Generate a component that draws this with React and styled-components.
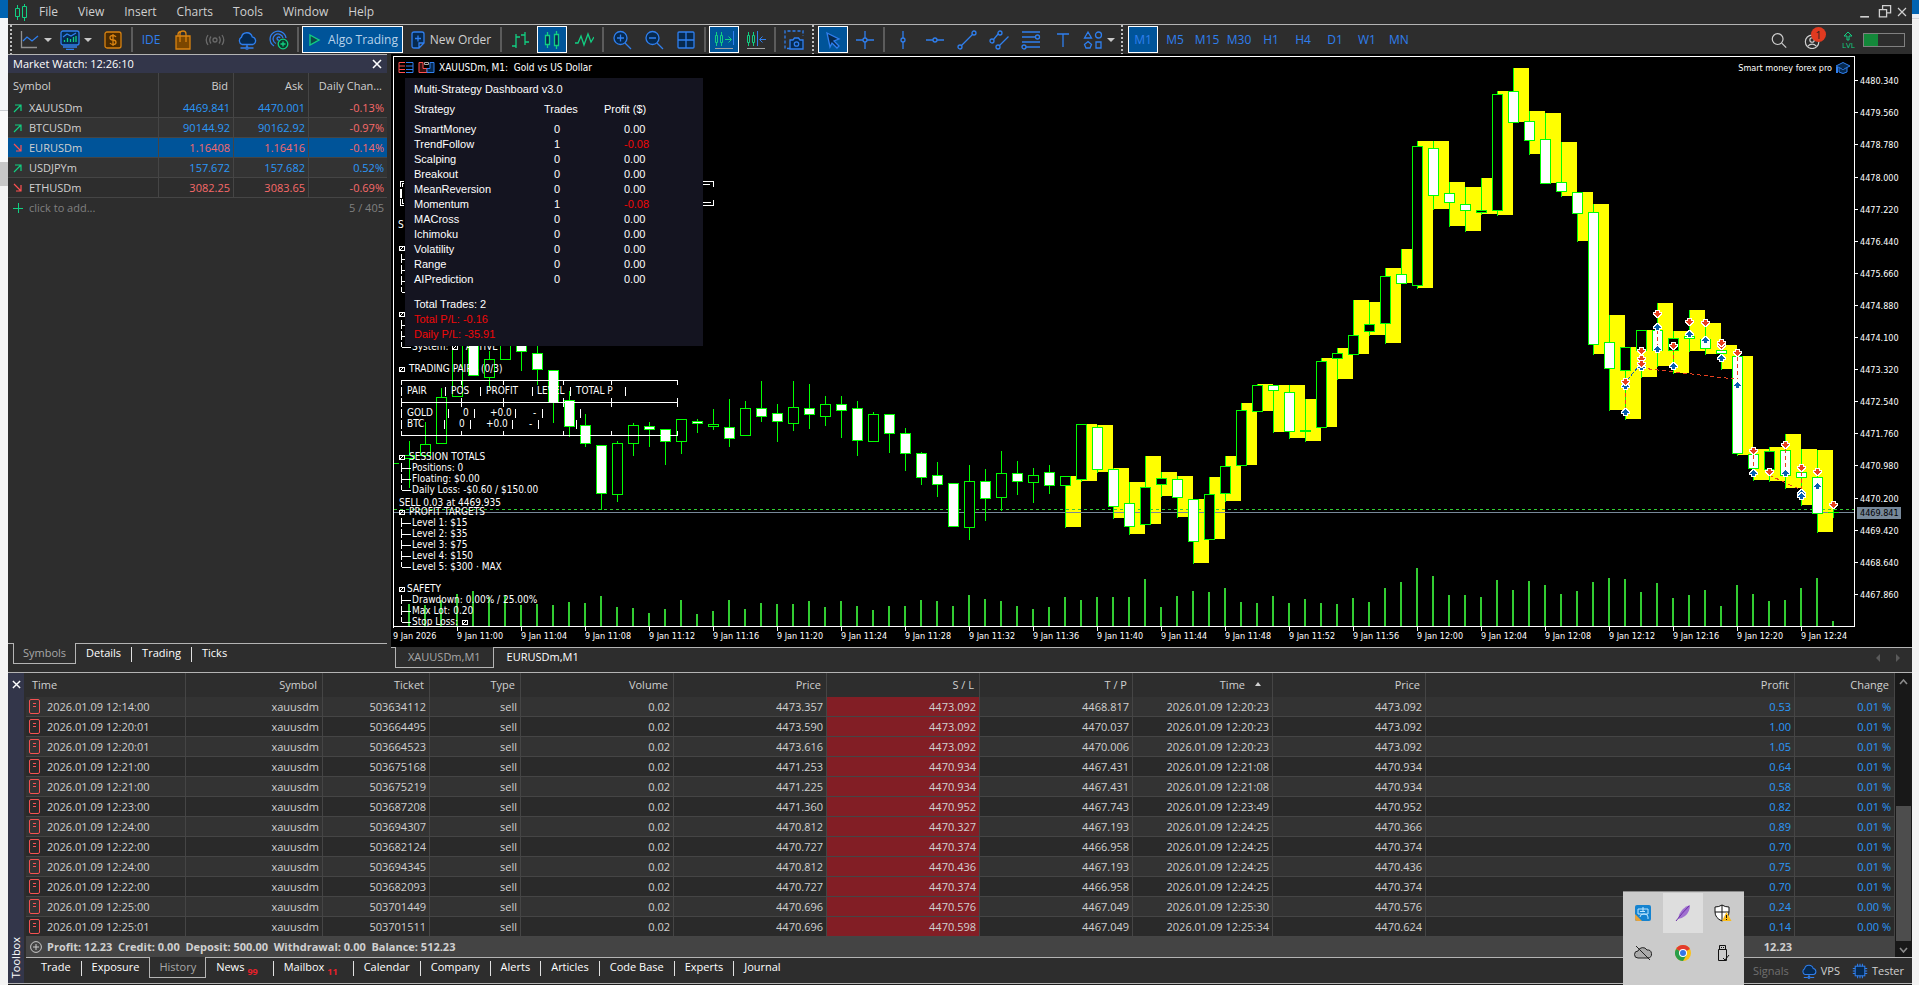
import React from "react"

import styled, { createGlobalStyle } from "styled-components"

const bg = "#2d2d2d"
const text = "#d0d0d0"
const line = "#b4b4b4"
const grid = "#454545"
const blue = "#2f7fee"
const navy = "#06294f"
const selected = "#005499"
const green = "#12cf82"
const up = "#2b98f8"
const down = "#f86a6a"
const slate = "#33364a"
const lime = "#00ff00"

const GlobalStyle = createGlobalStyle`
    * {
        box-sizing: border-box;
    }
    body {
        margin: 0;
        background: #f4f4f4;
        font-family: "Open Sans", "Noto Sans", sans-serif;
        font-size: 11px;
        line-height: 16px;
        color: ${text};
    }
    button {
        background: transparent;
        border: none;
        padding: 0;
        margin: 0;
        font: inherit;
        color: inherit;
        cursor: pointer;
    }
    svg {
        display: block;
        flex: none;
    }
`;

const Desktop = styled.div`
    display: grid;
    grid-template-columns: 8px minmax(0, 1fr) 7px;
    height: 100vh;
    overflow: hidden;
`;

const LeftEdge = styled.div`
    background: linear-gradient(#0063b1 0 18px, #f4f6f8 18px 110px, #c9ccd0 110px 111px, #fafafa 111px 162px, #c8c8c8 162px 186px, #f4f4f4 186px);
`;

const RightEdge = styled.div`
    background: linear-gradient(#0063b1 0 14px, #e9eef4 14px 18px, #cfd3d8 18px 19px, #f2f2f2 19px);
`;

const Window = styled.main`
    display: grid;
    grid-template-rows: auto auto minmax(0, 1fr) auto;
    background: ${bg};
    border-bottom: 1px solid #1c1c1c;
    min-width: 0;
`;

const MenuBar = styled.header`
    display: flex;
    align-items: center;
    height: 25px;
    padding: 0 5px 0 6px;
    border-bottom: 1px solid ${line};
    font-size: 12px;
`;

const Menu = styled.nav`
    display: flex;
    flex: 1;
    gap: 20px;
    margin-left: 10px;
`;

const WindowButtons = styled.div`
    display: flex;
    gap: 4px;
    align-items: center;
`;

const Toolbar = styled.div`
    display: flex;
    align-items: center;
    height: 29px;
    font-size: 12px;
    padding-right: 7px;
`;

const Tool = styled.button`
    display: flex;
    align-items: center;
    justify-content: center;
    gap: ${p => p.$gap || 0}px;
    width: ${p => p.$width || 30}px;
    height: 27px;
    margin: 0 1px;
    color: ${p => p.$color || blue};
    background: ${p => p.$active ? selected : "transparent"};
    border: 1px solid ${p => p.$active ? "#fff" : "transparent"};
    white-space: nowrap;
`;

const Separator = styled.span`
    width: 2px;
    height: 25px;
    margin: 0 2px;
    background: #5c5c5c;
`;

const Grip = styled.span`
    width: 2px;
    height: 29px;
    margin: 0 ${p => p.$after || 4}px 0 2px;
    background: repeating-linear-gradient(#bdbdbd 0 2px, transparent 2px 4px);
`;

const Caret = styled.span`
    border: 4px solid transparent;
    border-top: 4px solid #c8c8c8;
    border-bottom: none;
`;

const ToolbarRight = styled.div`
    display: flex;
    align-items: center;
    gap: 16px;
    margin-left: auto;
`;

const Account = styled.button`
    position: relative;
    width: 22px;
    height: 22px;
`;

const Badge = styled.span`
    position: absolute;
    top: -2px;
    right: 0;
    width: 15px;
    height: 15px;
    border-radius: 50%;
    background: #e03a20;
    color: #222;
    font-size: 11px;
    line-height: 15px;
    text-align: center;
`;

const Level = styled.div`
    display: flex;
    flex-direction: column;
    align-items: center;
    color: ${green};
    font-size: 8px;
    line-height: 8px;
`;

const Connection = styled.div`
    width: 42px;
    height: 14px;
    margin-left: -8px;
    border: 1px solid #808080;
    background: linear-gradient(90deg, #14883a 0 14px, transparent 14px);
`;

const Workspace = styled.section`
    display: grid;
    grid-template-columns: 379px minmax(0, 1fr);
    column-gap: 4px;
    min-height: 0;
`;

const Panel = styled.aside`
    display: flex;
    flex-direction: column;
    border-top: 1px solid ${line};
    min-height: 0;
`;

const PanelTitle = styled.div`
    display: flex;
    align-items: center;
    justify-content: space-between;
    height: 18px;
    padding: 0 5px;
    background: ${slate};
    color: #fff;
`;

const WatchTable = styled.table`
    width: 100%;
    table-layout: fixed;
    border-collapse: separate;
    border-spacing: 0;
    th, td {
        padding: 0 3px;
        font-weight: 400;
        text-align: right;
        white-space: nowrap;
        border-right: 1px solid ${grid};
    }
    th {
        height: 25px;
        padding: 0 5px;
    }
    td {
        height: 20px;
        border-bottom: 1px solid ${grid};
    }
    th:first-child, td:first-child {
        text-align: left;
        padding-left: 5px;
    }
    th:last-child, td:last-child {
        border-right: none;
    }
    tfoot td {
        border: none;
        color: #808080;
    }
`;

const WatchRow = styled.tr`
    background: ${p => p.$selected ? selected : "transparent"};
    &:nth-child(even) {
        background: #333;
    }
`;

const SymbolName = styled.span`
    display: flex;
    align-items: center;
    gap: 6px;
`;

const Quote = styled.td`
    color: ${p => p.$down ? down : up};
`;

const Tabs = styled.div`
    display: flex;
    align-items: flex-start;
    flex: none;
    height: ${p => p.$height}px;
    padding-left: ${p => p.$indent || 0}px;
    margin-top: ${p => p.$push ? "auto" : 0};
    border-top: 1px solid ${line};
`;

const Tab = styled.button`
    display: flex;
    align-items: center;
    height: 21px;
    padding: 0 ${p => p.$pad || 9}px;
    color: ${p => p.$active ? "#a8a8a8" : "#fff"};
    background: ${p => p.$active ? bg : "transparent"};
    border: 1px solid ${p => p.$active ? line : "transparent"};
    border-top: none;
    margin-top: -1px;
    white-space: nowrap;
`;

const TabLine = styled.span`
    width: 1px;
    height: 15px;
    margin-top: 3px;
    background: #e0e0e0;
`;

const Count = styled.sub`
    color: #e8202a;
    font-size: 9px;
    line-height: 9px;
    font-weight: 700;
    margin: 8px 5px 0 3px;
    vertical-align: baseline;
`;

const ChartColumn = styled.div`
    display: flex;
    flex-direction: column;
    min-width: 0;
    min-height: 0;
`;

const ChartArea = styled.div`
    position: relative;
    flex: 1;
    min-height: 0;
    background: #000;
    overflow: hidden;
    svg.plot {
        width: 100%;
        height: 100%;
        shape-rendering: crispEdges;
    }
    svg.plot text {
        font-family: "DejaVu Sans Condensed", "DejaVu Sans", sans-serif;
        font-size: 10px;
        fill: #fff;
    }
    svg.plot .axis text, svg.plot .expert {
        font-size: 9px;
    }
`;

const Dashboard = styled.div`
    position: absolute;
    left: 14px;
    top: 24px;
    width: 298px;
    padding: 4px 9px;
    background: #141420;
    color: #fff;
    font-family: "Liberation Sans", Arial, sans-serif;
    font-size: 11px;
    line-height: 15px;
`;

const Strategies = styled.table`
    border-collapse: collapse;
    margin-bottom: 10px;
    th, td {
        font-weight: 400;
        text-align: left;
        padding: 0;
        width: 60px;
    }
    th {
        padding: 5px 0;
    }
    th:first-child, td:first-child {
        width: 130px;
    }
    td:nth-child(2) {
        padding-left: 10px;
    }
    td:nth-child(3) {
        padding-left: 20px;
    }
`;

const Result = styled.td`
    color: ${p => p.$loss ? "#f00808" : "#fff"};
`;

const Loss = styled.div`
    color: #f00808;
`;

const ChartTabs = styled(Tabs)`
    justify-content: space-between;
`;

const TabGroup = styled.div`
    display: flex;
`;

const Pager = styled.div`
    display: flex;
    gap: 12px;
    padding: 5px 10px 0 0;
    color: #5a5a5a;
`;

const Toolbox = styled.section`
    display: grid;
    grid-template-columns: 16px minmax(0, 1fr);
    column-gap: 2px;
    border-top: 1px solid ${line};
    border-bottom: 1px solid ${line};
`;

const Strip = styled.div`
    display: flex;
    flex-direction: column;
    justify-content: space-between;
    align-items: center;
    padding: 7px 0 5px;
    background: ${slate};
    color: #fff;
    span {
        writing-mode: vertical-rl;
        transform: rotate(180deg);
    }
`;

const History = styled.div`
    display: grid;
    grid-template-columns: minmax(0, 1fr) 17px;
`;

const HistoryTable = styled.table`
    width: 100%;
    table-layout: fixed;
    border-collapse: separate;
    border-spacing: 0;
    th, td {
        font-weight: 400;
        text-align: right;
        white-space: nowrap;
        padding: 0 3px;
        border-right: 1px solid ${grid};
    }
    th {
        height: 24px;
        padding: 0 5px;
    }
    td {
        height: 20px;
        border-bottom: 1px solid ${grid};
    }
    tbody tr:nth-child(odd) {
        background: #333;
    }
    tbody tr:nth-child(even) {
        background: #2a2a2a;
    }
    th:first-child {
        text-align: left;
        padding-left: 6px;
    }
`;

const TimeCell = styled.span`
    display: flex;
    align-items: center;
    gap: 7px;
`;

const StopLoss = styled.td`
    background: #821e25;
`;

const Profit = styled.td`
    color: ${up};
`;

const SortMark = styled.span`
    display: inline-block;
    margin: 0 6px 3px 10px;
    border: 3px solid transparent;
    border-bottom: 4px solid ${text};
    border-top: none;
`;

const Scroll = styled.div`
    grid-row: span 2;
    display: flex;
    flex-direction: column;
    align-items: center;
    background: #181818;
    color: #8a8a8a;
    padding: 6px 0 4px;
`;

const Thumb = styled.div`
    width: 15px;
    height: 135px;
    margin: auto 0 6px;
    background: #4d4d4d;
`;

const Summary = styled.div`
    display: flex;
    align-items: center;
    gap: 5px;
    height: 20px;
    padding: 0 103px 0 4px;
    background: #444;
    font-weight: 700;
    white-space: pre;
    span:last-child {
        margin-left: auto;
    }
`;

const Services = styled.div`
    display: flex;
    align-items: center;
    align-self: stretch;
    gap: 12px;
    margin-left: auto;
    padding-right: 8px;
`;

const Service = styled.button`
    display: flex;
    align-items: center;
    gap: 4px;
    color: ${p => p.$off ? "#707070" : text};
`;

const Tray = styled.div`
    position: fixed;
    right: 175px;
    bottom: 0;
    width: 121px;
    height: 94px;
    padding: 1px 0;
    overflow: hidden;
    display: grid;
    grid-template-columns: repeat(3, 40px);
    grid-auto-rows: 40px;
    background: #cbcbcb;
    border-top: 1px solid #8a8a8a;
`;

const TrayButton = styled.button`
    display: flex;
    align-items: center;
    justify-content: center;
    background: ${p => p.$hover ? "#dedede" : "transparent"};
`;

const Icon = ({ size = 20, color = blue, fill = "none", width = 1.3, children }) => (
    <svg width={size} height={size} viewBox="0 0 20 20" fill={fill} stroke={color} strokeWidth={width}>
        {children}
    </svg>
)

const Cross = ({ size = 10, color = "#fff", width = 1.6 }) => (
    <svg width={size} height={size} viewBox="0 0 10 10" stroke={color} strokeWidth={width}>
        <path d="M1 1L9 9M9 1L1 9" />
    </svg>
)

const Logo = () => (
    <svg width="15" height="17" viewBox="0 0 15 17" fill="none" stroke={green}>
        <path d="M3.500 1v3M3.500 13v3M1.500 4.500h4v8h-4zM10.500 0v2M10.500 14v3M8.500 2.500h4v11h-4z" />
    </svg>
)

const Candles = () => (
    <Icon color={green}>
        <path d="M5.500 2v3M5.500 15v3M14.500 1v3M14.500 16v3" />
        <path d="M3.500 5.500h4v9h-4zM12.500 4.500h4v11h-4z" fill={navy} />
    </Icon>
)

const Cloud = ({ size = 20 }) => (
    <Icon size={size}>
        <path d="M5 14.500a4 4 0 0 1 -.5 -7.300a5.500 5.500 0 0 1 10.700 -.4a4 4 0 0 1 .8 7.700z" fill={navy} />
        <path d="M10 14.500v3.500M3.500 18h5M11.500 18h5" />
        <circle cx="10" cy="18" r="1.2" />
    </Icon>
)

const Trend = ({ falling }) => (
    <svg width="10" height="10" viewBox="0 0 10 10" fill="none" stroke={falling ? "#ff5050" : green} strokeWidth="1.2">
        {falling ? <path d="M1 1L8 8M8 2V8H3" /> : <path d="M1 9L8 2M2 2H8V8" />}
    </svg>
)

const Doc = () => (
    <svg width="11" height="15" viewBox="0 0 11 15" fill="none" stroke="#f45252">
        <rect x="0.5" y="0.5" width="10" height="14" rx="1.5" />
        <path d="M4 4.500h3M4 7.500h3" />
    </svg>
)

const quotes = [
    ["XAUUSDm", "4469.841", "4470.001", "-0.13%", 0],
    ["BTCUSDm", "90144.92", "90162.92", "-0.97%", 0],
    ["EURUSDm", "1.16408", "1.16416", "-0.14%", 1],
    ["USDJPYm", "157.672", "157.682", "0.52%", 0],
    ["ETHUSDm", "3082.25", "3083.65", "-0.69%", 1],
]

const strategies = [
    ["SmartMoney", 0, "0.00"],
    ["TrendFollow", 1, "-0.08"],
    ["Scalping", 0, "0.00"],
    ["Breakout", 0, "0.00"],
    ["MeanReversion", 0, "0.00"],
    ["Momentum", 1, "-0.08"],
    ["MACross", 0, "0.00"],
    ["Ichimoku", 0, "0.00"],
    ["Volatility", 0, "0.00"],
    ["Range", 0, "0.00"],
    ["AIPrediction", 0, "0.00"],
]

const deals = [
    ["12:14:00", "503634112", "4473.357", "4473.092", "4468.817", "12:20:23", "4473.092", "0.53", "0.01 %"],
    ["12:20:01", "503664495", "4473.590", "4473.092", "4470.037", "12:20:23", "4473.092", "1.00", "0.01 %"],
    ["12:20:01", "503664523", "4473.616", "4473.092", "4470.006", "12:20:23", "4473.092", "1.05", "0.01 %"],
    ["12:21:00", "503675168", "4471.253", "4470.934", "4467.431", "12:21:08", "4470.934", "0.64", "0.01 %"],
    ["12:21:00", "503675219", "4471.225", "4470.934", "4467.431", "12:21:08", "4470.934", "0.58", "0.01 %"],
    ["12:23:00", "503687208", "4471.360", "4470.952", "4467.743", "12:23:49", "4470.952", "0.82", "0.01 %"],
    ["12:24:00", "503694307", "4470.812", "4470.327", "4467.193", "12:24:25", "4470.366", "0.89", "0.01 %"],
    ["12:22:00", "503682124", "4470.727", "4470.374", "4466.958", "12:24:25", "4470.374", "0.70", "0.01 %"],
    ["12:24:00", "503694345", "4470.812", "4470.436", "4467.193", "12:24:25", "4470.436", "0.75", "0.01 %"],
    ["12:22:00", "503682093", "4470.727", "4470.374", "4466.958", "12:24:25", "4470.374", "0.70", "0.01 %"],
    ["12:25:00", "503701449", "4470.696", "4470.576", "4467.049", "12:25:30", "4470.576", "0.24", "0.00 %"],
    ["12:25:01", "503701511", "4470.696", "4470.598", "4467.049", "12:25:34", "4470.624", "0.14", "0.00 %"],
]

// high, body top, body bottom, low, bearish
const candles = [
    [441, 455, 458, 487, 0], [422, 444, 455, 456, 0], [388, 397, 443, 443, 0], [330, 336, 396, 396, 0],
    [330, 336, 375, 375, 1], [351, 359, 377, 387, 0], [330, 336, 359, 359, 0], [330, 340, 351, 370, 1],
    [346, 353, 369, 384, 1], [370, 370, 402, 422, 1], [391, 400, 426, 436, 1], [414, 425, 443, 446, 1],
    [445, 445, 493, 509, 1], [441, 443, 494, 501, 0], [423, 425, 443, 455, 0], [422, 426, 429, 446, 1],
    [429, 429, 441, 464, 1], [419, 419, 441, 453, 0], [419, 421, 423, 432, 1], [409, 424, 426, 429, 0],
    [399, 427, 438, 446, 1], [401, 408, 435, 435, 0], [381, 408, 416, 421, 1], [404, 413, 421, 441, 1],
    [381, 407, 423, 430, 0], [384, 408, 414, 428, 1], [396, 404, 416, 425, 0], [396, 404, 410, 437, 1],
    [401, 408, 440, 455, 1], [412, 414, 441, 441, 0], [414, 414, 433, 452, 1], [428, 433, 453, 470, 1],
    [452, 453, 477, 484, 1], [462, 475, 484, 496, 1], [483, 483, 526, 526, 1], [465, 481, 527, 539, 0],
    [469, 481, 498, 520, 1], [451, 473, 497, 510, 0], [461, 473, 481, 494, 1], [468, 475, 482, 502, 0],
    [465, 472, 485, 493, 1], [476, 476, 485, 527, 0], [424, 424, 479, 481, 0], [425, 427, 469, 472, 1],
    [468, 469, 506, 518, 1], [482, 503, 526, 534, 1], [456, 487, 524, 524, 0], [472, 478, 484, 496, 0],
    [476, 479, 497, 517, 1], [499, 499, 541, 563, 1], [477, 494, 539, 539, 0], [456, 466, 493, 501, 0],
    [403, 410, 465, 465, 0], [384, 385, 411, 411, 0], [385, 385, 390, 432, 1], [385, 392, 431, 438, 1],
    [399, 430, 431, 441, 0], [358, 361, 427, 427, 0], [348, 353, 358, 379, 0], [300, 335, 354, 354, 0],
    [302, 324, 331, 335, 0], [268, 276, 323, 343, 0], [249, 274, 283, 283, 1], [141, 146, 285, 288, 0],
    [141, 148, 195, 209, 1], [182, 193, 202, 226, 1], [187, 204, 210, 231, 1], [178, 210, 212, 214, 0],
    [91, 94, 210, 215, 0], [68, 91, 122, 122, 1], [111, 121, 140, 154, 1], [113, 139, 183, 183, 1],
    [142, 182, 191, 196, 1], [192, 192, 213, 241, 1], [204, 212, 344, 354, 1], [315, 342, 368, 410, 1],
    [347, 347, 370, 419, 0], [330, 330, 350, 377, 0], [303, 330, 350, 366, 1], [331, 338, 350, 373, 0],
    [310, 336, 338, 351, 1], [323, 339, 348, 354, 1], [345, 350, 353, 369, 1], [356, 356, 453, 455, 1],
    [449, 454, 468, 480, 1], [447, 451, 469, 481, 0], [434, 450, 475, 488, 1], [449, 472, 477, 505, 1],
    [450, 477, 513, 532, 1], [505, 512, 512, 517, 0],
]

const volumes = [
    22, 21, 26, 32, 35, 29, 30, 21, 22, 21, 24, 23, 30, 19, 18, 13, 17, 26, 12, 15, 26, 17, 23,
    22, 22, 25, 19, 25, 20, 16, 20, 20, 26, 25, 20, 31, 27, 25, 20, 17, 19, 29, 26, 29, 29, 29,
    47, 19, 30, 35, 34, 38, 24, 23, 30, 23, 27, 23, 22, 28, 24, 38, 44, 58, 50, 31, 31, 29, 46,
    36, 45, 41, 32, 35, 44, 48, 47, 34, 43, 28, 31, 36, 20, 41, 32, 25, 26, 38, 48, 5,
]

const sells = [
    [78, 314], [77, 351], [77, 359], [77, 364], [76, 382], [79, 346], [80, 322], [81, 323], [82, 346],
    [82, 343], [83, 353], [84, 451], [85, 472], [86, 445], [87, 468], [88, 472], [89, 505],
]
const buys = [
    [78, 326], [78, 348], [76, 385], [76, 411], [77, 366], [79, 365], [80, 333], [81, 339], [82, 357],
    [83, 384], [84, 472], [86, 472], [87, 492], [87, 495], [88, 485],
]

const prices = [
    ["4480.340", 80], ["4479.560", 112], ["4478.780", 144], ["4478.000", 177], ["4477.220", 209],
    ["4476.440", 241], ["4475.660", 273], ["4474.880", 305], ["4474.100", 337], ["4473.320", 369],
    ["4472.540", 401], ["4471.760", 433], ["4470.980", 465], ["4470.200", 498], ["4469.420", 530],
    ["4468.640", 562], ["4467.860", 594],
]

const notes = [
    [398, 225, "S"],
    [412, 347, "System:      ACTIVE"],
    [409, 369, "TRADING PAIRS (0/3)"],
    [407, 391, "PAIR"], [451, 391, "POS"], [486, 391, "PROFIT"], [537, 391, "LEVEL"], [576, 391, "TOTAL P"],
    [407, 413, "GOLD"], [463, 413, "0"], [490, 413, "+0.0"], [533, 413, "-"],
    [407, 424, "BTC"], [459, 424, "0"], [486, 424, "+0.0"], [529, 424, "-"],
    [409, 457, "SESSION TOTALS"],
    [412, 468, "Positions: 0"],
    [412, 479, "Floating: $0.00"],
    [412, 490, "Daily Loss: -$0.60 / $150.00"],
    [399, 503, "SELL 0.03 at 4469.935"],
    [409, 512, "PROFIT TARGETS"],
    [412, 523, "Level 1: $15"],
    [412, 534, "Level 2: $35"],
    [412, 545, "Level 3: $75"],
    [412, 556, "Level 4: $150"],
    [412, 567, "Level 5: $300 · MAX"],
    [407, 589, "SAFETY"],
    [412, 600, "Drawdown: 0.00% / 25.00%"],
    [412, 611, "Max Lot: 0.20"],
    [412, 622, "Stop Loss:"],
]

// vertical bars between the cells of the pairs table
const bars = {
    391: [401, 445, 480, 532, 570, 625],
    413: [401, 448, 474, 515, 542, 580],
    424: [401, 444, 470, 512, 538, 576],
}

// first row, number of rows
const trees = [[259, 4], [325, 3], [468, 3], [523, 5], [600, 3]]
const boxes = [[399, 248], [399, 314], [399, 369], [399, 457], [399, 512], [399, 589], [462, 622], [452, 347]]

const cx = i => 409 + i * 16
const bottom = 626

const Arrow = ({ at, y, sell }) => (
    <path
        transform={`translate(${cx(at)} ${y})`}
        d={sell ? "M-1 -3H2V-1H4V0H3V1H2V2H1V3H0V2H-1V1H-2V0H-3V-1H-1Z" : "M-1 4H2V2H4V1H3V0H2V-1H1V-2H0V-1H-1V0H-2V1H-3V2H-1Z"}
        fill={sell ? "#e84020" : "#0860b0"}
        stroke="#fff"
        strokeWidth="2"
        paintOrder="stroke"
    />
)

const Plot = () => (
    <svg className="plot" viewBox="391 54 1521 593" preserveAspectRatio="xMinYMin meet">
        <g fill="#ffff00">
            {candles.map(([high, , , low], i) => i > 40 && i < 89 && (
                <rect key={i} x={cx(i) + 1} y={high} width="15" height={low - high} />
            ))}
        </g>
        <g fill="#32cd32">
            {volumes.map((v, i) => <rect key={i} x={cx(i) - 1} y={bottom - v} width="2" height={v} />)}
        </g>
        <path d="M394 509.500H1854" stroke="#32cd32" strokeDasharray="3 3" />
        <path d="M394 512.500H1854" stroke="#778899" />
        <path d="M394 463.500h5" stroke={lime} />
        {candles.map(([high, top, low, tail, bear], i) => (
            <g key={i}>
                <rect x={cx(i)} y={high} width="1" height={tail - high + 1} fill={lime} />
                <rect x={cx(i) - 5} y={top} width="11" height={low - top + 1} fill={lime} />
                {low - top > 1 && (
                    <rect x={cx(i) - 4} y={top + 1} width="9" height={low - top - 1} fill={bear ? "#fff" : "#000"} />
                )}
            </g>
        ))}
        <g stroke="#e84020" strokeDasharray="4 3">
            <path d="M1641 368L1734 379M1769 475L1801 490M1625.500 386V408M1657.500 330V345M1673.500 348V362M1737.500 357V379M1753.500 455V468M1785.500 449V470M1801.500 472V490M1721.500 347V357" />
        </g>
        <path d="M1627 380L1641 364" stroke="#0860b0" strokeDasharray="4 2" />
        {buys.map(([i, y], k) => <Arrow key={k} at={i} y={y} />)}
        {sells.map(([i, y], k) => <Arrow key={k} at={i} y={y} sell />)}

        <path d="M393.500 628V56.500H1854.500V626.500H393.500" fill="none" stroke="#fff" />
        <g className="axis">
            {prices.map(([label, y]) => (
                <React.Fragment key={label}>
                    <rect x="1855" y={y} width="3" height="1" fill="#fff" />
                    <text x="1860" y={y + 4}>{label}</text>
                </React.Fragment>
            ))}
            <rect x="1857" y="507" width="44" height="12" fill="#778899" />
            <text x="1860" y="516" style={{ fill: "#000" }}>4469.841</text>
            <text x="393" y="639">9 Jan 2026</text>
            {Array.from({ length: 22 }, (_, k) => {
                const minutes = k * 4
                const label = `9 Jan ${11 + Math.floor(minutes / 60)}:${String(minutes % 60).padStart(2, "0")}`
                return (
                    <React.Fragment key={k}>
                        <rect x={457 + k * 64} y={bottom} width="1" height="5" fill="#fff" />
                        <text x={457 + k * 64} y="639">{label}</text>
                    </React.Fragment>
                )
            })}
        </g>

        <g fill="none" stroke="#fff">
            <path d="M404 181.500H400.500V187M404 183.500H402.500V187M400.500 189V198M401.500 189V198M404 205.500H400.500V199M404 203.500H402.500V199" />
            <path d="M703 181.500H713.500V187M703 184.500H710M703 205.500H713.500V200M703 202.500H711" />
            <path d="M401.500 385V380.500H677.500V385M461.500 381v4M503.500 381v4M563.500 381v4M611.500 381v4" />
            <path d="M401.500 402.500H677.500M401.500 398v9M461.500 398v9M503.500 398v9M563.500 398v9M611.500 398v9M677.500 398v9" />
            <path d="M401.500 431V435.500H677.500V431M461.500 431v4M503.500 431v4M563.500 431v4M611.500 431v4" />
            {Object.entries(bars).map(([y, xs]) => xs.map(x => <path key={x} d={`M${x + 0.5} ${y - 4}v9`} />))}
            {trees.map(([y, n]) => Array.from({ length: n }, (_, k) => (
                <path key={y + k} d={`M401.500 ${y + k * 11 - 5}v${k === n - 1 ? 5 : 9}M401.500 ${y + k * 11 + 0.5}h9`} />
            )))}
            {boxes.map(([x, y]) => <path key={x + y} d={`M${x + 0.5} ${y - 1.5}h5v4h-5zM${x + 1} ${y + 2}l4 -4`} />)}
        </g>
        {notes.map(([x, y, label]) => <text key={y + "-" + x} x={x} y={y + 3} xmlSpace="preserve">{label}</text>)}

        <g fill="none" shapeRendering="auto">
            <path d="M405 62.500h-6v10h6M399 66h6M399 69.500h6" stroke="#ff5050" />
            <path d="M406 62.500h7v10h-7M406 66h7M406 69.500h7" stroke={blue} />
            <path d="M423 62.500h-4v10h8v-4h-4z" stroke="#ff5050" fill="#3a1010" />
            <path d="M430 62.500h4v10h-7v-4h3z" stroke={blue} fill={navy} />
            <path d="M424.500 62.500h4v2h-4z" stroke="#aaa" />
            <path d="M1836 66l7 -3.500l7 3.500l-7 3.500zM1839 68v4q4 3 8 0v-4" stroke={blue} fill={navy} />
            <path d="M1837 67v6" stroke={blue} strokeWidth="2" />
        </g>
        <text x="439" y="71" xmlSpace="preserve">XAUUSDm, M1:  Gold vs US Dollar</text>
        <text className="expert" x="1832" y="71" textAnchor="end">Smart money forex pro</text>
    </svg>
)

const ToolbarRow = () => (
    <Toolbar>
        <Grip />
        <Tool $width={36} $gap={5} aria-label="Chart types">
            <Icon color="#909090"><path d="M2.500 1V17.500H18" /><path d="M4 11l4-4l5 4l6-5" stroke={blue} /></Icon>
            <Caret />
        </Tool>
        <Tool $width={41} $gap={4} aria-label="Indicators">
            <Icon>
                <rect x="1" y="1" width="18" height="14" rx="2" fill={navy} />
                <path d="M3 7l4-3l4 2l5-3M3 17h14M6 19.300h8" />
                <path d="M4.500 12v-2M7.500 12V8M10.500 12V9M13.500 12V7M16 12V6" stroke={green} />
            </Icon>
            <Caret />
        </Tool>
        <Tool aria-label="Deposit">
            <Icon color="#d98310">
                <rect x="2" y="2" width="16" height="16" rx="2" fill="#4a2a00" />
                <path d="M13 7q-1-1.500-3-1.500q-3 0-3 2.200t3 2.300t3 2.300t-3 2.200q-2 0-3-1.500M10 4v12" />
            </Icon>
        </Tool>
        <Separator />
        <Tool>IDE</Tool>
        <Tool aria-label="Market">
            <Icon color="#d98310">
                <path d="M3 6h14v13H3z" fill="#7a4600" />
                <path d="M7 12V4q0-3 3-3t3 3v8M5 6V4.500q0-2.500 2.500-3" />
            </Icon>
        </Tool>
        <Tool aria-label="Signals">
            <Icon color="#6a6a6a">
                <circle cx="10" cy="10" r="2" />
                <path d="M6 6.500q-2.500 3.500 0 7M14 6.500q2.500 3.500 0 7M3 5q-3.500 5 0 10M17 5q3.500 5 0 10" />
            </Icon>
        </Tool>
        <Tool aria-label="VPS"><Cloud /></Tool>
        <Tool aria-label="Community">
            <Icon>
                <path d="M5 16A8 8 0 1 1 17 8M7 13.500A5 5 0 1 1 14 8M10 10a1.500 1.500 0 1 1 1-2" />
                <circle cx="14" cy="14" r="4.800" stroke={green} fill="#0c3a2a" />
                <path d="M14 11.500v5M11.500 14h5" stroke={green} />
            </Icon>
        </Tool>
        <Separator />
        <Tool $width={101} $gap={7} $color="#b8d2ea" $active>
            <svg width="14" height="12" viewBox="0 0 14 12" fill="none" stroke={green} strokeWidth="1.4">
                <path d="M3 1L12 6L3 11Z" fill="#0c4a4a" />
            </svg>
            Algo Trading
        </Tool>
        <Tool $width={92} $gap={5} $color={text}>
            <svg width="14" height="18" viewBox="0 0 14 18" fill="none" stroke={blue} strokeWidth="1.3">
                <path d="M3 1h8q2 0 2 2v9l-5 5H3q-2 0-2-2V3q0-2 2-2zM13 12H8v5" fill={navy} />
                <path d="M7 4.500v6M4 7.500h6" />
            </svg>
            New Order
        </Tool>
        <Separator />
        <Tool aria-label="Bars"><Icon color={green}><path d="M6 4v14M2 16h4M6 7h4M15 2v13M11 5h4M15 12h4" /></Icon></Tool>
        <Tool $active aria-label="Candles"><Candles /></Tool>
        <Tool aria-label="Line"><Icon color={green}><path d="M1 13h3l3-7l3 9l4-11l3 8l3-5" /></Icon></Tool>
        <Separator />
        <Tool aria-label="Zoom in">
            <Icon><circle cx="8.500" cy="8" r="6.500" fill={navy} /><path d="M13 13l6 6M5 8h7M8.500 4.500v7" /></Icon>
        </Tool>
        <Tool aria-label="Zoom out">
            <Icon><circle cx="8.500" cy="8" r="6.500" fill={navy} /><path d="M13 13l6 6M5 8h7" /></Icon>
        </Tool>
        <Tool aria-label="Tile windows">
            <Icon><rect x="2" y="2" width="16" height="16" rx="1" fill={navy} /><path d="M10 2v16M2 10h16" /></Icon>
        </Tool>
        <Separator />
        <Tool $active aria-label="Auto scroll">
            <Icon color={green} width={1}>
                <path d="M1.500 5.500h2v7h-2zM6.500 5.500h2v7h-2zM2.500 2v3M2.500 13v3M7.500 2v3M7.500 13v3M11 9.500h6M14.500 6.500l3 3l-3 3" />
                <path d="M19.500 1v14" stroke={blue} /><path d="M1 18.500h18" stroke="#a0a0a0" />
            </Icon>
        </Tool>
        <Tool aria-label="Chart shift">
            <Icon color={green} width={1}>
                <path d="M1.500 5.500h2v7h-2zM6.500 5.500h2v7h-2zM2.500 2v3M2.500 13v3M7.500 2v3M7.500 13v3" />
                <path d="M11.500 1v15M14 9.500h6M16.500 6.500l-3 3l3 3" stroke={blue} /><path d="M1 18.500h18" stroke="#a0a0a0" />
            </Icon>
        </Tool>
        <Separator />
        <Tool aria-label="Screenshot">
            <Icon>
                <path d="M6 18.500H1V1h18v5" strokeDasharray="3 2" />
                <path d="M6 10h3l1.500-2h4L16 10h3v9H6z" fill={navy} /><circle cx="12.500" cy="14" r="2.200" />
            </Icon>
        </Tool>
        <Grip $after={3} />
        <Tool $active aria-label="Cursor"><Icon><path d="M4 3l12 6l-5 2l5 5l-2 2l-5-5l-2 4z" fill={navy} /></Icon></Tool>
        <Tool aria-label="Crosshair"><Icon><path d="M10 1v7M10 12v7M1 10h7M12 10h7" /><circle cx="10" cy="10" r="2" /></Icon></Tool>
        <Separator />
        <Tool aria-label="Vertical line"><Icon><path d="M10 1v7M10 12v7" /><circle cx="10" cy="10" r="2" /></Icon></Tool>
        <Tool aria-label="Horizontal line"><Icon><path d="M1 10h7M12 10h7" /><circle cx="10" cy="10" r="2" /></Icon></Tool>
        <Tool aria-label="Trend line"><Icon><path d="M4.500 15.500l11-11" /><circle cx="3" cy="17" r="2" /><circle cx="17" cy="3" r="2" /></Icon></Tool>
        <Tool aria-label="Channel">
            <Icon><path d="M4.500 9.500l5-6M10.500 15.500l9-9" /><circle cx="3" cy="11" r="2" /><circle cx="11" cy="3" r="2" /><circle cx="9" cy="17" r="2" /></Icon>
        </Tool>
        <Tool aria-label="Fibonacci">
            <Icon><path d="M1 2h18M1 7h13M1 12h18M5 17h14" /><circle cx="16.500" cy="7" r="2" /><circle cx="3" cy="17" r="2" /></Icon>
        </Tool>
        <Tool aria-label="Text"><Icon><path d="M4 4h12M10 4v13" /></Icon></Tool>
        <Tool $width={38} $gap={4} aria-label="Shapes">
            <Icon>
                <path d="M5 2l3.500 6h-7zM13 12h5v6h-5zM5 11.500l3.500 3l-1.500 3.500H3l-1.500-3.500z" /><circle cx="15.500" cy="5" r="3" />
            </Icon>
            <Caret />
        </Tool>
        <Grip />
        {["M1", "M5", "M15", "M30", "H1", "H4", "D1", "W1", "MN"].map(t => <Tool key={t} $active={t === "M1"}>{t}</Tool>)}
        <ToolbarRight>
            <button aria-label="Search">
                <Icon size={18} color={text}><circle cx="8.500" cy="9" r="6" /><path d="M13 13.500l5 5" /></Icon>
            </button>
            <Account aria-label="Account">
                <Icon size={18} color={text}><circle cx="9" cy="12" r="7.500" /><circle cx="9" cy="10" r="2.500" /><path d="M4 17q5-5 10 0" /></Icon>
                <Badge>1</Badge>
            </Account>
            <Level>
                <svg width="10" height="10" viewBox="0 0 10 10" fill="none" stroke={green}><path d="M5 1L9 5H6V9H4V5H1Z" /></svg>
                LVL
            </Level>
            <Connection />
        </ToolbarRight>
    </Toolbar>
)

const MarketWatch = () => (
    <Panel>
        <PanelTitle>
            Market Watch: 12:26:10
            <button aria-label="Close Market Watch"><Cross /></button>
        </PanelTitle>
        <WatchTable>
            <colgroup><col /><col width="75" /><col width="75" /><col width="78" /></colgroup>
            <thead>
                <tr><th>Symbol</th><th>Bid</th><th>Ask</th><th>Daily Chan...</th></tr>
            </thead>
            <tbody>
                {quotes.map(([name, bid, ask, change, falling]) => (
                    <WatchRow key={name} $selected={name === "EURUSDm"}>
                        <td><SymbolName><Trend falling={falling} />{name}</SymbolName></td>
                        <Quote $down={falling}>{bid}</Quote>
                        <Quote $down={falling}>{ask}</Quote>
                        <Quote $down={change[0] === "-"}>{change}</Quote>
                    </WatchRow>
                ))}
            </tbody>
            <tfoot>
                <tr>
                    <td>
                        <SymbolName>
                            <svg width="10" height="10" viewBox="0 0 10 10" stroke={green}><path d="M5.500 0V10M0 5.500H10" /></svg>
                            click to add...
                        </SymbolName>
                    </td>
                    <td /><td /><td>5 / 405</td>
                </tr>
            </tfoot>
        </WatchTable>
        <Tabs $height={29} $indent={5} $push>
            <Tab $active>Symbols</Tab>
            <Tab>Details</Tab>
            <TabLine />
            <Tab>Trading</Tab>
            <TabLine />
            <Tab>Ticks</Tab>
        </Tabs>
    </Panel>
)

const StrategyPanel = () => (
    <Dashboard>
        <div>Multi-Strategy Dashboard v3.0</div>
        <Strategies>
            <thead><tr><th>Strategy</th><th>Trades</th><th>Profit ($)</th></tr></thead>
            <tbody>
                {strategies.map(([name, trades, profit]) => (
                    <tr key={name}>
                        <td>{name}</td>
                        <td>{trades}</td>
                        <Result $loss={profit[0] === "-"}>{profit}</Result>
                    </tr>
                ))}
            </tbody>
        </Strategies>
        <div>Total Trades: 2</div>
        <Loss>Total P/L: -0.16</Loss>
        <Loss>Daily P/L: -35.91</Loss>
    </Dashboard>
)

const TradeHistory = () => (
    <HistoryTable>
        <colgroup>
            <col width="160" /><col width="137" /><col width="107" /><col width="91" /><col width="153" />
            <col width="153" /><col width="153" /><col width="153" /><col width="140" /><col width="153" />
            <col /><col width="100" />
        </colgroup>
        <thead>
            <tr>
                <th>Time</th><th>Symbol</th><th>Ticket</th><th>Type</th><th>Volume</th><th>Price</th>
                <th>S / L</th><th>T / P</th><th>Time<SortMark /></th><th>Price</th><th>Profit</th><th>Change</th>
            </tr>
        </thead>
        <tbody>
            {deals.map(([time, ticket, price, sl, tp, closed, closePrice, profit, change]) => (
                <tr key={ticket}>
                    <td><TimeCell><Doc />2026.01.09 {time}</TimeCell></td>
                    <td>xauusdm</td>
                    <td>{ticket}</td>
                    <td>sell</td>
                    <td>0.02</td>
                    <td>{price}</td>
                    <StopLoss>{sl}</StopLoss>
                    <td>{tp}</td>
                    <td>2026.01.09 {closed}</td>
                    <td>{closePrice}</td>
                    <Profit>{profit}</Profit>
                    <Profit>{change}</Profit>
                </tr>
            ))}
        </tbody>
    </HistoryTable>
)

const toolboxTabs = [
    "Trade", "Exposure", "History", "News", "Mailbox", "Calendar", "Company", "Alerts", "Articles",
    "Code Base", "Experts", "Journal",
]
const counts = { News: 99, Mailbox: 11 }

const TrayIcons = () => (
    <Tray>
        <TrayButton aria-label="Graphics">
            <svg width="16" height="16" viewBox="0 0 16 16">
                <rect width="16" height="16" rx="2" fill="#1583d0" /><path d="M0 9v5q0 2 2 2h5z" fill="#e8a33a" />
                <path d="M3 4h10v5H3zM5 12q0-3 4-3t4 3v2M5 6.500h5M8 2v4" stroke="#bfe6ff" fill="none" />
            </svg>
        </TrayButton>
        <TrayButton $hover aria-label="Feather">
            <svg width="16" height="18" viewBox="0 0 16 18">
                <path d="M15 1Q15 8 10 12Q6 15 3 15Q4 9 8 5Q11 2 15 1Z" fill="#a070d0" />
                <path d="M1 17Q7 9 14 2" stroke="#6c2fa8" fill="none" />
            </svg>
        </TrayButton>
        <TrayButton aria-label="Security">
            <svg width="18" height="18" viewBox="0 0 18 18">
                <path d="M8 1Q11 3 15 3V8Q15 14 8 17Q1 14 1 8V3Q5 3 8 1Z" fill="#fff" stroke="#111" />
                <path d="M8 1v16M1 8h14" stroke="#111" />
                <path d="M12.500 8L17.500 17H8Z" fill="#fbbc1a" /><path d="M12.500 11v3M12.500 15v1" stroke="#111" />
            </svg>
        </TrayButton>
        <TrayButton aria-label="Cloud drive">
            <svg width="18" height="16" viewBox="0 0 18 16" fill="none" stroke="#222">
                <path d="M4 13a3.500 3.500 0 0 1 0-7a5 5 0 0 1 9-1a4 4 0 0 1 1 8z" fill="#aaa" /><path d="M2 1L16 15" />
            </svg>
        </TrayButton>
        <TrayButton aria-label="Chrome">
            <svg width="16" height="16" viewBox="0 0 16 16">
                <circle cx="8" cy="8" r="8" fill="#fbc116" />
                <path d="M8 8L1.070 4A8 8 0 0 1 14.930 4Z" fill="#e33b2e" />
                <path d="M8 8L1.070 4A8 8 0 0 0 8 16Z" fill="#2a9e4a" />
                <path d="M8 8H8L8 16L11.500 10Z" fill="#2a9e4a" />
                <circle cx="8" cy="8" r="4" fill="#fff" /><circle cx="8" cy="8" r="3" fill="#3576e8" />
            </svg>
        </TrayButton>
        <TrayButton aria-label="Eject device">
            <svg width="14" height="18" viewBox="0 0 14 18" fill="none" stroke="#111">
                <path d="M3.500 5.500V1.500h6v4M2.500 5.500h8v11h-8zM5 3.500h1M7 3.500h1" /><path d="M7 14l2 2l4-5" />
            </svg>
        </TrayButton>
    </Tray>
)

const App = () => {
    const [tab, setTab] = React.useState("History")

    return (
        <Desktop>
            <GlobalStyle />
            <LeftEdge />
            <Window>
                <MenuBar>
                    <Logo />
                    <Menu>
                        {["File", "View", "Insert", "Charts", "Tools", "Window", "Help"].map(m => <button key={m}>{m}</button>)}
                    </Menu>
                    <WindowButtons>
                        <button aria-label="Minimize"><Icon size={16} color={text} width={2}><path d="M4 16h11" /></Icon></button>
                        <button aria-label="Restore">
                            <Icon size={16} color={text} width={1.6}><path d="M7 7V2h10v9h-5M3 7h9v9H3z" /></Icon>
                        </button>
                        <button aria-label="Close"><Cross color={text} width={1.2} /></button>
                    </WindowButtons>
                </MenuBar>
                <ToolbarRow />
                <Workspace>
                    <MarketWatch />
                    <ChartColumn>
                        <ChartArea>
                            <Plot />
                            <StrategyPanel />
                        </ChartArea>
                        <ChartTabs $height={25} $indent={4}>
                            <TabGroup>
                                <Tab $pad={12} $active>XAUUSDm,M1</Tab>
                                <Tab $pad={12}>EURUSDm,M1</Tab>
                            </TabGroup>
                            <Pager>
                                <svg width="8" height="10" viewBox="0 0 8 10" fill="currentColor"><path d="M6 1V9L2 5Z" /></svg>
                                <svg width="8" height="10" viewBox="0 0 8 10" fill="currentColor"><path d="M2 1V9L6 5Z" /></svg>
                            </Pager>
                        </ChartTabs>
                    </ChartColumn>
                </Workspace>
                <Toolbox>
                    <Strip>
                        <button aria-label="Close Toolbox"><Cross size={9} /></button>
                        <span>Toolbox</span>
                    </Strip>
                    <div>
                        <History>
                            <TradeHistory />
                            <Scroll>
                                <svg width="9" height="6" viewBox="0 0 9 6" fill="none" stroke="currentColor" strokeWidth="1.6"><path d="M1 5L4.500 1L8 5" /></svg>
                                <Thumb />
                                <svg width="9" height="6" viewBox="0 0 9 6" fill="none" stroke="currentColor" strokeWidth="1.6"><path d="M1 1L4.500 5L8 1" /></svg>
                            </Scroll>
                            <Summary>
                                <Icon size={12} color={text} width={1.6}><circle cx="10" cy="10" r="9" /><path d="M10 5v10M5 10h10" /></Icon>
                                <span>{"Profit: 12.23  Credit: 0.00  Deposit: 500.00  Withdrawal: 0.00  Balance: 512.23"}</span>
                                <span>12.23</span>
                            </Summary>
                        </History>
                        <Tabs $height={26} $indent={5}>
                            {toolboxTabs.map((name, i) => {
                                const next = toolboxTabs[i + 1]
                                return (
                                    <React.Fragment key={name}>
                                        <Tab $active={name === tab} onClick={() => setTab(name)}>
                                            {name}
                                            {counts[name] && <Count>{counts[name]}</Count>}
                                        </Tab>
                                        {next && name !== tab && next !== tab && <TabLine />}
                                    </React.Fragment>
                                )
                            })}
                            <Services>
                                <Service $off>Signals</Service>
                                <Service><Cloud size={16} />VPS</Service>
                                <Service>
                                    <Icon size={16}>
                                        <rect x="4" y="4" width="12" height="12" fill={navy} />
                                        <path d="M7 1v3M10 1v3M13 1v3M7 16v3M10 16v3M13 16v3M1 7h3M1 10h3M1 13h3M16 7h3M16 10h3M16 13h3" />
                                    </Icon>
                                    Tester
                                </Service>
                            </Services>
                        </Tabs>
                    </div>
                </Toolbox>
            </Window>
            <RightEdge />
            <TrayIcons />
        </Desktop>
    )
}

export default App
